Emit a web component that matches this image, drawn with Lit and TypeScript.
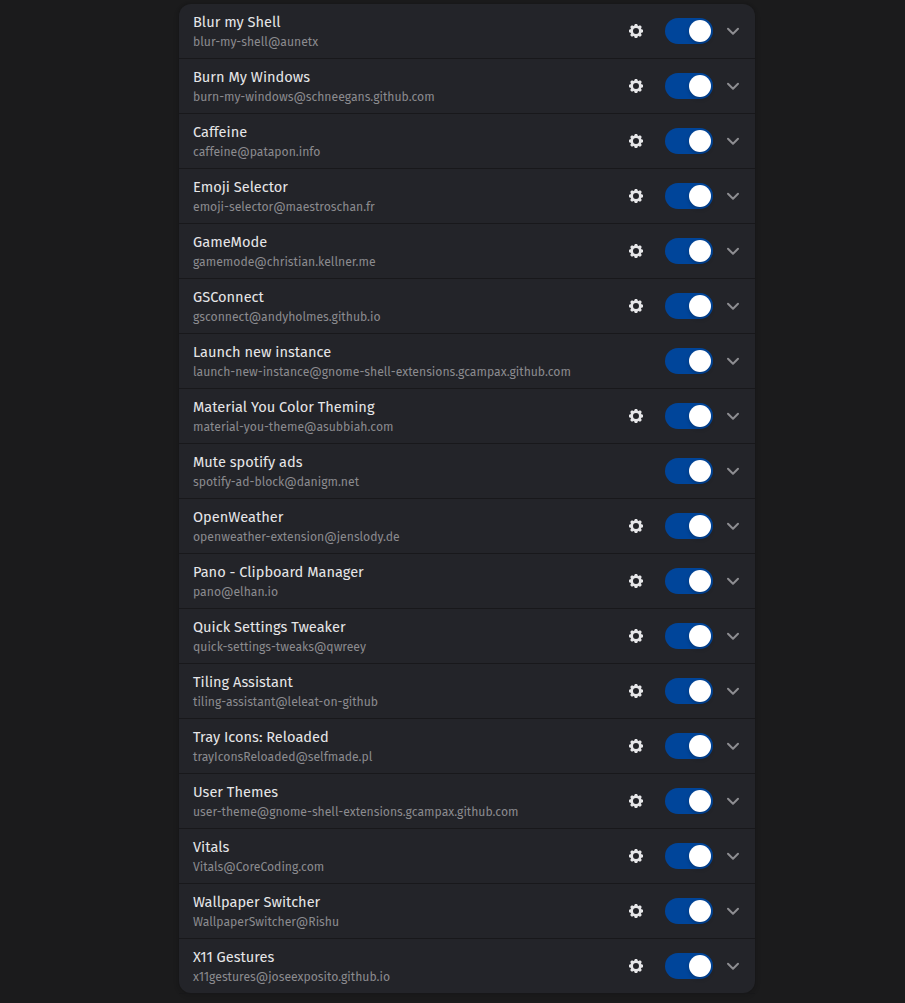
import { css, html, LitElement, nothing, svg } from 'lit';
import { customElement, property } from 'lit/decorators.js';

interface Extension {
  name: string;
  uuid: string;
  prefs?: boolean;
}

const EXTENSIONS: Extension[] = [
  { name: 'Blur my Shell', uuid: 'blur-my-shell@aunetx' },
  { name: 'Burn My Windows', uuid: 'burn-my-windows@schneegans.github.com' },
  { name: 'Caffeine', uuid: 'caffeine@patapon.info' },
  { name: 'Emoji Selector', uuid: 'emoji-selector@maestroschan.fr' },
  { name: 'GameMode', uuid: 'gamemode@christian.kellner.me' },
  { name: 'GSConnect', uuid: 'gsconnect@andyholmes.github.io' },
  {
    name: 'Launch new instance',
    uuid: 'launch-new-instance@gnome-shell-extensions.gcampax.github.com',
    prefs: false,
  },
  { name: 'Material You Color Theming', uuid: 'material-you-theme@asubbiah.com' },
  { name: 'Mute spotify ads', uuid: 'spotify-ad-block@danigm.net', prefs: false },
  { name: 'OpenWeather', uuid: 'openweather-extension@jenslody.de' },
  { name: 'Pano - Clipboard Manager', uuid: 'pano@elhan.io' },
  { name: 'Quick Settings Tweaker', uuid: 'quick-settings-tweaks@qwreey' },
  { name: 'Tiling Assistant', uuid: 'tiling-assistant@leleat-on-github' },
  { name: 'Tray Icons: Reloaded', uuid: 'trayIconsReloaded@selfmade.pl' },
  { name: 'User Themes', uuid: 'user-theme@gnome-shell-extensions.gcampax.github.com' },
  { name: 'Vitals', uuid: 'Vitals@CoreCoding.com' },
  { name: 'Wallpaper Switcher', uuid: 'WallpaperSwitcher@Rishu' },
  { name: 'X11 Gestures', uuid: 'x11gestures@joseexposito.github.io' },
];

const TEETH = [0, 45, 90, 135];

/**
 * `<extension-row>` — One extension with its settings button, switch and expander.
 *
 * @attr {string} name
 * @attr {string} uuid
 */
@customElement('extension-row')
export class ExtensionRow extends LitElement {
  static override styles = css`
    :host {
      display: flex;
      align-items: center;
      box-sizing: border-box;
      height: 55px;
      padding: 0 14px;
      border-bottom: 1px solid #18181b;
    }

    .text {
      flex: 1;
      min-width: 0;
      padding-top: 2px;
      white-space: nowrap;
    }

    .name {
      color: #e6e6e8;
      font-size: 14.6px;
      line-height: 20px;
    }

    .uuid {
      color: #8b8b8f;
      font-size: 12.2px;
      line-height: 20px;
    }

    button {
      display: block;
      flex: none;
      padding: 0;
      border: 0;
      background: none;
    }

    svg {
      display: block;
    }

    .settings {
      margin-right: 21px;
      color: #e6e6e8;
    }

    .switch {
      box-sizing: border-box;
      width: 48px;
      height: 26px;
      margin-right: 12px;
      padding: 2px;
      border-radius: 13px;
      background: #00459a;
    }

    .knob {
      display: block;
      width: 22px;
      height: 22px;
      margin-left: auto;
      border-radius: 50%;
      background: #fff;
      box-shadow: 0 2px 4px rgba(0, 0, 0, 0.2);
    }

    .expand {
      color: #8d8d91;
    }
  `;

  @property({ type: String })
  name = '';

  @property({ type: String })
  uuid = '';

  @property({ type: Boolean })
  prefs = false;

  override render() {
    return html`
      <div class="text">
        <div class="name">${this.name}</div>
        <div class="uuid">${this.uuid}</div>
      </div>
      ${this.prefs ? this.renderSettings() : nothing}
      <button class="switch" role="switch" aria-checked="true" aria-label=${this.name}>
        <span class="knob"></span>
      </button>
      <button class="expand" aria-label="Details">
        <svg width="16" height="16" viewBox="0 0 16 16" fill="none" aria-hidden="true">
          <path
            d="M3 5.8 8 10.8 13 5.8"
            stroke="currentColor"
            stroke-width="2"
            stroke-linecap="round"
            stroke-linejoin="round"
          />
        </svg>
      </button>
    `;
  }

  private renderSettings() {
    return html`
      <button class="settings" aria-label="Settings">
        <svg width="16" height="16" viewBox="0 0 16 16" aria-hidden="true">
          <circle cx="8" cy="8" r="4.35" fill="none" stroke="currentColor" stroke-width="2.7" />
          ${TEETH.map(
            (angle) => svg`
              <path
                d="M6.6 1.6Q6.7 1 7.2 1h1.6q.5 0 .6.6L9.8 3.4H6.2ZM6.6 14.4q.1.6.6.6h1.6q.5 0 .6-.6l.4-1.8H6.2Z"
                fill="currentColor"
                transform="rotate(${angle} 8 8)"
              />
            `,
          )}
        </svg>
      </button>
    `;
  }
}

@customElement('app-root')
export class AppRoot extends LitElement {
  static override styles = css`
    :host {
      display: block;
      box-sizing: border-box;
      height: 1003px;
      padding-top: 4px;
      overflow: hidden;
      background: #1b1b1c;
      font-family: 'Fira Sans', 'Noto Sans', sans-serif;
    }

    .list {
      width: 576px;
      height: 989px;
      margin-left: 179px;
      overflow: hidden;
      border-radius: 12px;
      background: #232429;
      box-shadow:
        0 0 0 1px rgba(0, 0, 0, 0.03),
        0 1px 3px 1px rgba(0, 0, 0, 0.07),
        0 2px 6px 2px rgba(0, 0, 0, 0.03);
    }

    .shadow {
      width: 576px;
      margin-left: 179px;
      height: 1px;
      background: #171719;
    }
  `;

  override render() {
    return html`
      <div class="list">
        ${EXTENSIONS.map(
          (ext) => html`
            <extension-row
              .name=${ext.name}
              .uuid=${ext.uuid}
              .prefs=${ext.prefs ?? true}
            ></extension-row>
          `,
        )}
      </div>
      <div class="shadow"></div>
    `;
  }
}

declare global {
  interface HTMLElementTagNameMap {
    'extension-row': ExtensionRow;
    'app-root': AppRoot;
  }
}
